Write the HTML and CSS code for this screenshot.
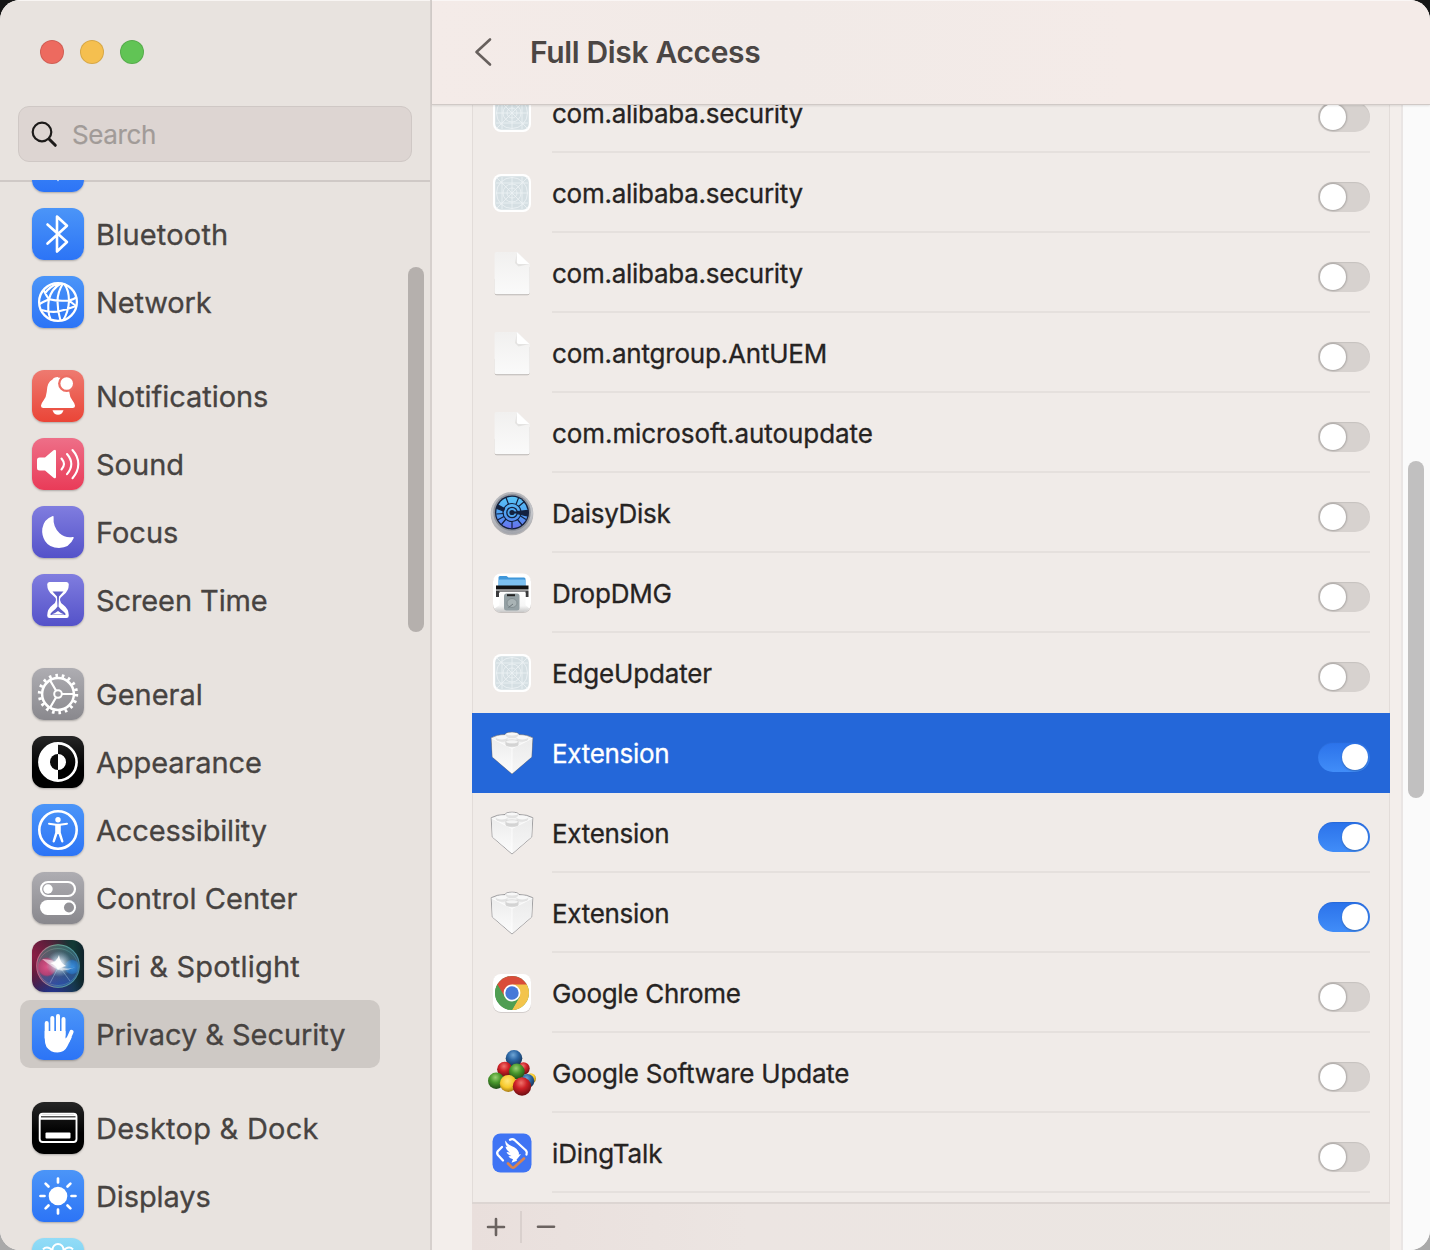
FILE: index.html
```html
<!DOCTYPE html>
<html lang="en">
<head>
<meta charset="utf-8">
<title>Full Disk Access</title>
<link rel="stylesheet" href="styles.css">
</head>
<body>
<svg class="defs" width="0" height="0" aria-hidden="true">
  <defs>
    <linearGradient id="paper" x1="0" y1="0" x2="0" y2="1"><stop offset="0" stop-color="#f1f0ef"/><stop offset="1" stop-color="#fafafa"/></linearGradient>
    <linearGradient id="rim" x1="0" y1="0" x2="0" y2="1"><stop offset="0" stop-color="#b4b5b9"/><stop offset=".5" stop-color="#c6c7cb"/><stop offset="1" stop-color="#a2a4ab"/></linearGradient>
    <linearGradient id="disc" x1="0" y1="0" x2="0" y2="1"><stop offset="0" stop-color="#5bc4f6"/><stop offset=".6" stop-color="#4f9cf2"/><stop offset="1" stop-color="#6a70ef"/></linearGradient>
    <linearGradient id="printer" x1="0" y1="0" x2="0" y2="1"><stop offset="0" stop-color="#ffffff"/><stop offset=".7" stop-color="#f6f6f6"/><stop offset="1" stop-color="#c9c9c9"/></linearGradient>
    <linearGradient id="brickl" x1="0" y1="0" x2="0" y2="1"><stop offset="0" stop-color="#ececec"/><stop offset="1" stop-color="#fcfcfc"/></linearGradient>
    <linearGradient id="brickr" x1="0" y1="0" x2="0" y2="1"><stop offset="0" stop-color="#ebebeb"/><stop offset="1" stop-color="#f6f6f6"/></linearGradient>
    <radialGradient id="bblue" cx=".45" cy=".3" r=".7"><stop offset="0" stop-color="#6fa6d6"/><stop offset=".45" stop-color="#2c66a4"/><stop offset="1" stop-color="#15304f"/></radialGradient>
    <radialGradient id="bred" cx=".45" cy=".3" r=".7"><stop offset="0" stop-color="#f0736c"/><stop offset=".45" stop-color="#cf2127"/><stop offset="1" stop-color="#6d0d12"/></radialGradient>
    <radialGradient id="bgreen" cx=".45" cy=".3" r=".7"><stop offset="0" stop-color="#9bd073"/><stop offset=".45" stop-color="#4a9a2d"/><stop offset="1" stop-color="#1f4d16"/></radialGradient>
    <radialGradient id="byellow" cx=".45" cy=".35" r=".7"><stop offset="0" stop-color="#ffe67a"/><stop offset=".55" stop-color="#f7c92c"/><stop offset="1" stop-color="#9a6d10"/></radialGradient>
    <radialGradient id="siriw"><stop offset="0" stop-color="#fff"/><stop offset=".35" stop-color="#e4f5ff" stop-opacity=".75"/><stop offset="1" stop-color="#8fc6d8" stop-opacity="0"/></radialGradient>
    <radialGradient id="sirip"><stop offset="0" stop-color="#e8538a" stop-opacity=".9"/><stop offset=".8" stop-color="#d03c72" stop-opacity=".75"/><stop offset="1" stop-color="#c03060" stop-opacity="0"/></radialGradient>
    <radialGradient id="sirib"><stop offset="0" stop-color="#3e97e8" stop-opacity=".9"/><stop offset=".8" stop-color="#2878cc" stop-opacity=".7"/><stop offset="1" stop-color="#2060b0" stop-opacity="0"/></radialGradient>
    <linearGradient id="sirig" x1=".2" y1="0" x2=".6" y2="1"><stop offset="0" stop-color="#3fa986" stop-opacity=".5"/><stop offset=".5" stop-color="#5d7fa8" stop-opacity=".5"/><stop offset="1" stop-color="#2f5fd0" stop-opacity=".6"/></linearGradient>
    <linearGradient id="sirir" x1="0" y1="0" x2="1" y2="0"><stop offset="0" stop-color="#d8628a"/><stop offset=".5" stop-color="#6fb89e"/><stop offset="1" stop-color="#4a90a8"/></linearGradient>

    <symbol id="app-generic" viewBox="0 0 48 48">
      <rect x="5" y="5" width="38" height="38" rx="8" fill="#fff"/>
      <rect x="7.200" y="7.200" width="33.600" height="33.600" rx="6" fill="#d5dfe3"/>
      <g fill="none" stroke="#edf3f5" stroke-width=".8">
        <path d="M8 14H40M8 24H40M8 34H40M14 8V40M24 8V40M34 8V40M8.500 8.500 39.500 39.500M39.500 8.500 8.500 39.500"/>
        <circle cx="24" cy="24" r="15.500"/><circle cx="24" cy="24" r="9"/><circle cx="24" cy="24" r="5"/>
      </g>
    </symbol>
    <symbol id="app-doc" viewBox="0 0 48 48">
      <path d="M6.800 30V44.300q0 1.900 1.900 1.900H39.500q2 0 2-1.900V18z" fill="#aaa5a3" opacity=".8"/>
      <path d="M8.500 3H29.500L41.700 15V43.500q0 1.700-1.700 1.700H8.300q-1.700 0-1.700-1.700V4.700Q6.600 3 8.500 3z" fill="url(#paper)"/>
      <path d="M29 3.500 41.200 15 30.500 17.500 27 14z" fill="#dddbda" opacity=".7"/>
      <path d="M28.800 3V13q0 2 2 2H41.500z" fill="#fff"/>
    </symbol>
    <symbol id="app-daisy" viewBox="0 0 48 48">
      <circle cx="24" cy="25" r="21.300" fill="#77797f" opacity=".5"/>
      <circle cx="24" cy="24" r="21" fill="url(#rim)"/>
      <circle cx="24" cy="23.500" r="18.700" fill="#8f939c"/>
      <circle cx="24" cy="23.500" r="17" fill="#13213f"/>
      <circle cx="24" cy="23.500" r="15.700" fill="url(#disc)"/>
      <g stroke="#13213f" stroke-width="1.200" fill="none">
        <circle cx="24" cy="23.500" r="9"/>
        <path d="M20.500 15.200 18 8.500M28 15.400 30.500 9M30.500 17.500 36.500 12.500M32.500 27 38 30.500M29.500 30.500 34 36M24 32.500V39M18 30 13.500 35.500M16 27.500 9.500 31M15.500 24.500 8.500 25"/>
        <path d="M16.500 19.500 9.800 16 9.200 19.500 15.500 22zM29 22.500 39.500 21.500V27L29 24.500z" fill="#13213f"/>
      </g>
      <circle cx="24" cy="23.500" r="5.200" fill="#4ea6ee" stroke="#13213f" stroke-width="1.300"/>
      <circle cx="24" cy="23.500" r="2.600" fill="#13213f"/><path d="M24 22.500H30V24.500H24z" fill="#13213f"/>
    </symbol>
    <symbol id="app-dmg" viewBox="0 0 48 48">
      <rect x="5" y="6" width="38" height="38" rx="8" fill="#aaa5a3" opacity=".6"/>
      <rect x="5" y="4.500" width="38" height="38.500" rx="8" fill="#fff"/>
      <path d="M10.500 10V8.500q0-1.500 1.500-1.500h6.500l2 1.600H36q1.500 0 1.500 1.500V20h-27z" fill="#3f97da"/>
      <path d="M10.500 12q0-1.500 1.500-1.500H36q1.500 0 1.500 1.500v7h-27z" fill="#7cc0f1"/>
      <path d="M8 16.500H40.500V20.500H8z" fill="#121214"/>
      <path d="M8 21.500H40.500V28H37.500V24H11V28H8z" fill="#3a3a3c"/>
      <path d="M11.500 22.500H37.500V36l4 3.500q-1.500 3.500-6 3.500H12.500q-4.500 0-6-3.500L11.500 36z" fill="url(#printer)"/>
      <path d="M12 21.800H37V23H12z" fill="#8a8a8c"/>
      <rect x="16" y="24.500" width="15.500" height="17" rx="2.500" fill="#94a0a4"/>
      <rect x="19" y="25.200" width="8" height="2" fill="#222"/>
      <ellipse cx="24" cy="34" rx="5" ry="4.500" fill="#a9b3b5" stroke="#7e898d" stroke-width=".8"/>
      <path d="M20.500 38.500 25 35" stroke="#6d777b" stroke-width="1"/>
    </symbol>
    <symbol id="app-brick" viewBox="0 0 48 48">
      <path d="M3.200 8.700Q9 5.500 17 5.500 18 3.200 24 3.200t7 2.300q8 0 13.800 3.200L43.700 28 24 45 4.300 28z" fill="#f3f3f3" stroke="#66666a" stroke-opacity=".6" stroke-width="1" stroke-linejoin="round"/>
      <path d="M3.700 9.200 24 19.500V44.500L4.700 28z" fill="url(#brickl)"/>
      <path d="M44.300 9.200 24 19.500V44.500L43.300 28z" fill="url(#brickr)"/>
      <path d="M3.700 9.200 24 19.500 44.300 9.200" fill="none" stroke="#fff" stroke-width=".8"/>
      <path d="M24 19.500V44" stroke="#fff" stroke-width=".8"/>
      <g fill="#e2e2e2">
        <path d="M18 5v2.500q0 1.600 6 1.600t6-1.600V5z"/><ellipse cx="24" cy="5" rx="6" ry="1.500" fill="#f8f8f8"/>
        <path d="M8 8.600v2.200q1.500 2 8 2l3.500-1.300V8.600z"/><ellipse cx="13.800" cy="8.500" rx="5.800" ry="1.900" fill="#f8f8f8"/>
        <path d="M40 8.600v2.200q-1.500 2-8 2l-3.500-1.300V8.600z"/><ellipse cx="34.200" cy="8.500" rx="5.800" ry="1.900" fill="#f8f8f8"/>
        <path d="M17.500 13v2.500q0 2.300 6.500 2.300t6.500-2.300V13z" fill="#d4d4d4"/><ellipse cx="24" cy="12.800" rx="6.500" ry="2" fill="#f4f4f4" stroke="#c8c8c8" stroke-width=".5"/>
      </g>
    </symbol>
    <symbol id="app-chrome" viewBox="0 0 48 48">
      <rect x="5" y="5.800" width="38" height="38" rx="8" fill="#c9c4c2"/>
      <rect x="5" y="5" width="38" height="38" rx="8" fill="#fff"/>
      <circle cx="24" cy="24" r="17" fill="#4f9e52"/>
      <path d="M24 24 9.280 15.500A17 17 0 0 1 38.720 15.500z" fill="#d94c3a"/>
      <path d="M38.720 15.500A17 17 0 0 1 24 41L31.500 28 24 15.500z" fill="#f3c44c"/>
      <path d="M9.280 15.500 16.800 28 31.500 28 24 15.500H38.700L24 15.500z" fill="#d94c3a"/>
      <path d="M9.280 15.500A17 17 0 0 0 24 41L31.500 28H16.800z" fill="#4f9e52"/>
      <circle cx="24" cy="24" r="8.400" fill="#fff"/><circle cx="24" cy="24" r="6.700" fill="#4679d8"/>
    </symbol>
    <symbol id="app-balls" viewBox="0 0 48 48">
      <circle cx="35.500" cy="19.500" r="6.200" fill="url(#bred)"/>
      <circle cx="42.700" cy="29.500" r="5.300" fill="url(#byellow)"/>
      <circle cx="39.300" cy="32" r="7" fill="url(#bblue)"/>
      <circle cx="26" cy="9.300" r="8.300" fill="url(#bblue)"/>
      <circle cx="16.700" cy="20.300" r="7.600" fill="url(#bred)"/>
      <circle cx="28.800" cy="22.500" r="7.900" fill="url(#bgreen)"/>
      <circle cx="8.200" cy="31.700" r="8.200" fill="url(#bgreen)"/>
      <circle cx="20.300" cy="34.500" r="8.500" fill="url(#byellow)"/>
      <circle cx="34" cy="37.500" r="9.200" fill="url(#bred)"/>
    </symbol>
    <symbol id="app-ding" viewBox="0 0 48 48">
      <rect x="4.500" y="4.500" width="39" height="39" rx="8" fill="#3f74f4"/>
      <g fill="none" stroke="#fff" stroke-width="2.300" stroke-linecap="round" stroke-linejoin="round">
        <path d="M22 10.700q2.500-1.300 4.500.3L38 21.500q1.500 2 .5 4"/>
        <path d="M14 18 10 22q-1.500 1.700-.3 3.700L15 31.500"/>
      </g>
      <path d="M20 34.500 23.500 38q1.500 1.200 3 0L36 29.500" fill="none" stroke="#d98350" stroke-width="2.600" stroke-linecap="round" stroke-linejoin="round"/>
      <path d="M17.500 11.500q1.500 4 6 5.500 6 2 7.500 7l-.3 1.500 2.300-.2-4.500 5.500.5 1-5.500 2 1.500-3.500q-3.500-.5-4.500-3l3-.2q-4-1-5-4.200l3.500.6q-4-2.500-4.500-6l2 .4q-3-3-2-6.400z" fill="#fff"/>
    </symbol>
  </defs>
</svg>

<div class="window">
  <aside class="sidebar">
    <div class="lights"><i class="light red"></i><i class="light amber"></i><i class="light green"></i></div>
    <div class="search">
      <svg width="28" height="28" viewBox="0 0 28 28" fill="none" stroke="#1d1b1a" stroke-linecap="round"><circle cx="11" cy="12" r="9.300" stroke-width="2.200"/><path d="M18 19 24.300 25.300" stroke-width="3"/></svg>
      <span>Search</span>
    </div>
    <nav class="nav">
      <div class="group">
        <div class="item"><span class="tile blue"><svg viewBox="0 0 52 52"><path d="M24 38 26 41.500 28 38z" fill="#fff"/></svg></span></div>
        <div class="item"><span class="tile blue"><svg viewBox="0 0 52 52"><path d="M15.500 16.500 35 34 25 43.500V8.500L35 17.700 15.500 35.500" fill="none" stroke="#fff" stroke-width="2.600" stroke-linecap="round" stroke-linejoin="round"/></svg></span><span class="label l-bt">Bluetooth</span></div>
        <div class="item"><span class="tile blue"><svg viewBox="0 0 52 52" fill="none" stroke="#fff" stroke-width="2.100"><circle cx="26" cy="26" r="18.900" stroke-width="2.300"/><path d="M29 7.500Q19 13 16.800 24 15 35 18.500 43M31 7.500Q25.500 16 25.500 25.500T28.500 44.500M32 7.500Q37 14 37 25 36.500 36 31 44.500M11.500 14Q14.500 20 17 23.300 26 25.500 36.500 24.500 41.500 24 44.500 21M26 7.300Q17 11 13 17.500M7.500 28Q11 26 17 23.300M9.500 34Q20 37 27 35.300 35 33.500 44 30M37 24.500 44 30"/></svg></span><span class="label l-net">Network</span></div>
      </div>
      <div class="group">
        <div class="item"><span class="tile red"><svg viewBox="0 0 52 52"><path d="M26 7.500q8 0 10.500 8 .5 2 .8 6.500.3 5 3.500 9 2.200 2.700 2.200 4.500 0 2.500-2.500 2.500h-29Q9 38 9 35.500q0-1.800 2.200-4.500 3.200-4 3.500-9Q15 12 20.500 9.500 21.500 7 26 7z" fill="#fff"/><path d="M20.500 40.300h11q-1.500 4.500-5.500 4.500t-5.500-4.500z" fill="#fff"/><circle cx="34.700" cy="13.500" r="8.600" fill="#ec6d63"/><circle cx="34.700" cy="13.500" r="6.300" fill="#fff"/></svg></span><span class="label l-not">Notifications</span></div>
        <div class="item"><span class="tile pink"><svg viewBox="0 0 52 52"><path d="M7.500 19.500h5.500L21.500 12.300q2.500-1.500 2.500 1V38.700q0 2.500-2.500 1L13 32.500H7.500q-2.500 0-2.500-2.500v-8q0-2.500 2.500-2.500z" fill="#fff"/><path d="M29.500 20.500Q32 23.500 32 26t-2.500 5.500M35 16Q39.300 21 39.300 26T35 36.200M40.500 12Q46.300 18.500 46.300 26T40.500 40.200" fill="none" stroke="#fff" stroke-width="2.100" stroke-linecap="round"/></svg></span><span class="label l-snd">Sound</span></div>
        <div class="item"><span class="tile indigo"><svg viewBox="0 0 52 52"><path d="M20.700 10q1-.3.900 1-.8 10 6 16.200 5.500 5 13 3.800 1.700-.2 1 1.300Q37.500 42 27 42 17.500 42 13 35 9.500 29 10.300 22.500 12 13 20.700 10z" fill="#fff"/></svg></span><span class="label l-foc">Focus</span></div>
        <div class="item"><span class="tile indigo"><svg viewBox="0 0 52 52"><path d="M17.500 8h17q2.300 0 2.300 2.500 0 6.500-5.300 10.500-3.500 2.500-3.500 5t3.500 5Q36.800 35 36.800 41.500 36.800 44 34.500 44h-17q-2.300 0-2.300-2.500Q15.200 35 20.500 31q3.500-2.500 3.500-5t-3.500-5Q15.200 17 15.200 10.500 15.200 8 17.500 8z" fill="#fff"/><path d="M20.500 17.500h11L27 22.500 26.500 32.500q1.500 2.500 5.500 5.500 2 1.700 1.500 3h-15q-.5-1.300 1.500-3 4-3 5.500-5.500L25 22.500z" fill="#6060c8"/><path d="M19.500 40.500q3.500-1 6.500-3.500 3 2.500 6.500 3.500z" fill="#fff"/></svg></span><span class="label l-scr">Screen Time</span></div>
      </div>
      <div class="group">
        <div class="item"><span class="tile gray"><svg viewBox="0 0 52 52" fill="none" stroke="#fff"><circle cx="26" cy="26" r="18.500" stroke-width="3.400" stroke-dasharray="2.600 3.858"/><circle cx="26" cy="26" r="15.900" stroke-width="2.500"/><circle cx="26" cy="26" r="3.800" stroke-width="2"/><path d="M30 26H42M24 22.500 18 12.200M24 29.500 18 39.800" stroke-width="2.200"/></svg></span><span class="label l-gen">General</span></div>
        <div class="item"><span class="tile black"><svg viewBox="0 0 52 52"><circle cx="26" cy="26" r="18.600" fill="none" stroke="#fff" stroke-width="2.600"/><path d="M26 7.500a18.500 18.500 0 0 0 0 37zM26 18a8 8 0 0 1 0 16z" fill="#fff"/><path d="M26 18a8 8 0 0 0 0 16z" fill="#0b0b0b"/></svg></span><span class="label l-app">Appearance</span></div>
        <div class="item"><span class="tile blue"><svg viewBox="0 0 52 52"><circle cx="26" cy="26" r="18.700" fill="none" stroke="#fff" stroke-width="2.600"/><circle cx="26" cy="15.700" r="2.700" fill="#fff"/><path d="M17 19.700 24 20.700H28L35 19.700" fill="none" stroke="#fff" stroke-width="2" stroke-linecap="round"/><path d="M23.200 20.200h5.600v8.300l2.600 8.500q.3 1.300-.8 1.500-1 .2-1.400-.8L26.500 30h-1l-2.700 7.700q-.4 1-1.400.8-1.100-.2-.8-1.500l2.600-8.500z" fill="#fff"/></svg></span><span class="label l-acc">Accessibility</span></div>
        <div class="item"><span class="tile gray"><svg viewBox="0 0 52 52"><rect x="9" y="10" width="34" height="14" rx="7" fill="none" stroke="#fff" stroke-width="2.200"/><circle cx="16" cy="17" r="4.700" fill="#fff"/><rect x="8" y="28" width="36" height="15" rx="7.500" fill="#fff"/><circle cx="37" cy="35.500" r="5" fill="#939297"/></svg></span><span class="label l-con">Control Center</span></div>
        <div class="item"><span class="tile siri"><svg viewBox="0 0 52 52"><circle cx="26" cy="26" r="21.500" fill="url(#sirig)"/><circle cx="15" cy="27" r="10" fill="url(#sirip)"/><circle cx="40" cy="27" r="8" fill="url(#sirib)"/><path d="M27 26 18 43M27 26 38 41" stroke="#b9d8f0" stroke-width=".8" opacity=".5"/><circle cx="27" cy="24" r="13" fill="url(#siriw)"/><path d="M10 19Q22 19 27 25 33 31 44 27 34 31 29 30.500 22 29 10 19z" fill="#fff" opacity=".55"/><path d="M27 15Q28 23 34 26 28 27 26 30 24 25 18 23 25 22 27 15z" fill="#fff" opacity=".9"/><circle cx="26" cy="26" r="21.300" fill="none" stroke="url(#sirir)" stroke-width="1.100" opacity=".85"/><ellipse cx="26" cy="27" rx="20" ry="18.500" fill="none" stroke="url(#sirir)" stroke-width=".7" opacity=".6"/></svg></span><span class="label l-sir">Siri &amp; Spotlight</span></div>
        <div class="item selected"><span class="tile blue"><svg viewBox="0 0 52 52"><g fill="none" stroke="#fff" stroke-width="4" stroke-linecap="round"><path d="M14.700 15V30M20.300 10V27M26 8V27M31.500 11V27"/><path d="M39.500 24 35.500 33" stroke-width="4.200"/></g><path d="M12.700 23H33.500V30.500L37.600 27 39.700 29.500Q37 35 35.500 38 32.500 44.500 25.500 44.500T14.500 39Q12.700 35.500 12.700 30z" fill="#fff"/></svg></span><span class="label l-pri">Privacy &amp; Security</span></div>
      </div>
      <div class="group">
        <div class="item"><span class="tile black"><svg viewBox="0 0 52 52"><rect x="7.700" y="11.700" width="36.800" height="28.300" rx="3" fill="none" stroke="#fff" stroke-width="1.900"/><path d="M8 12.500H44.500V17.800H8z" fill="#fff"/><path d="M9 14.800H43.500" stroke="#555" stroke-width="1.400"/><rect x="13.500" y="30.500" width="25" height="6" rx="1" fill="#fff"/></svg></span><span class="label l-des">Desktop &amp; Dock</span></div>
        <div class="item"><span class="tile blue"><svg viewBox="0 0 52 52"><circle cx="26" cy="26" r="9.300" fill="#fff"/><path d="M26 8.500V12.500M26 39.500V43.500M8.500 26H12.500M39.500 26H43.500M13.600 13.600 16.500 16.500M35.500 35.500 38.400 38.400M38.400 13.600 35.500 16.500M16.500 35.500 13.600 38.400" stroke="#fff" stroke-width="2.700" stroke-linecap="round"/></svg></span><span class="label l-dis">Displays</span></div>
        <div class="item"><span class="tile cyan"><svg viewBox="0 0 52 52" fill="none" stroke="#fff" stroke-width="2"><path d="M20.500 14V11.500a5.500 5.500 0 0 1 11 0V14M20.500 14a5.500 5.500 0 0 0-9.500-2.500M31.500 14a5.500 5.500 0 0 1 9.500-2.500"/></svg></span></div>
      </div>
    </nav>
    <div class="side-thumb"></div>
  </aside>

  <main class="main">
    <header class="header">
      <svg width="20" height="30" viewBox="0 0 20 30" fill="none" stroke="#67605d" stroke-width="2.600" stroke-linecap="round" stroke-linejoin="round"><path d="M16 2.500 2.500 15 16 27.500"/></svg>
      <h1>Full Disk Access</h1>
    </header>
    <div class="body">
      <section class="panel">
        <div class="rows">
          <div class="row"><svg class="app"><use href="#app-generic"/></svg><div class="cell"><span class="name n-ali">com.alibaba.security</span><i class="toggle"></i></div></div>
          <div class="row"><svg class="app"><use href="#app-generic"/></svg><div class="cell"><span class="name n-ali">com.alibaba.security</span><i class="toggle"></i></div></div>
          <div class="row"><svg class="app"><use href="#app-doc"/></svg><div class="cell"><span class="name n-ali">com.alibaba.security</span><i class="toggle"></i></div></div>
          <div class="row"><svg class="app"><use href="#app-doc"/></svg><div class="cell"><span class="name n-ant">com.antgroup.AntUEM</span><i class="toggle"></i></div></div>
          <div class="row"><svg class="app"><use href="#app-doc"/></svg><div class="cell"><span class="name n-ms">com.microsoft.autoupdate</span><i class="toggle"></i></div></div>
          <div class="row"><svg class="app"><use href="#app-daisy"/></svg><div class="cell"><span class="name n-dai">DaisyDisk</span><i class="toggle"></i></div></div>
          <div class="row"><svg class="app"><use href="#app-dmg"/></svg><div class="cell"><span class="name n-dmg">DropDMG</span><i class="toggle"></i></div></div>
          <div class="row"><svg class="app"><use href="#app-generic"/></svg><div class="cell"><span class="name n-edg">EdgeUpdater</span><i class="toggle"></i></div></div>
          <div class="row active"><svg class="app"><use href="#app-brick"/></svg><div class="cell"><span class="name n-ext">Extension</span><i class="toggle on"></i></div></div>
          <div class="row"><svg class="app"><use href="#app-brick"/></svg><div class="cell"><span class="name n-ext">Extension</span><i class="toggle on"></i></div></div>
          <div class="row"><svg class="app"><use href="#app-brick"/></svg><div class="cell"><span class="name n-ext">Extension</span><i class="toggle on"></i></div></div>
          <div class="row"><svg class="app"><use href="#app-chrome"/></svg><div class="cell"><span class="name n-chr">Google Chrome</span><i class="toggle"></i></div></div>
          <div class="row"><svg class="app"><use href="#app-balls"/></svg><div class="cell"><span class="name n-gsu">Google Software Update</span><i class="toggle"></i></div></div>
          <div class="row"><svg class="app"><use href="#app-ding"/></svg><div class="cell"><span class="name n-din">iDingTalk</span><i class="toggle"></i></div></div>
        </div>
        <footer class="footer">
          <svg width="48" height="46" viewBox="0 0 48 46"><path d="M16 23H32M24 15V31" stroke="#6b6360" stroke-width="2.600" stroke-linecap="round"/></svg>
          <i class="split"></i>
          <svg width="48" height="46" viewBox="0 0 48 46"><path d="M16 22.700H32" stroke="#6b6360" stroke-width="2.600" stroke-linecap="round"/></svg>
        </footer>
      </section>
      <div class="track"><div class="thumb"></div></div>
    </div>
  </main>
</div>
</body>
</html>
```
FILE: styles.css
```css
* { box-sizing: border-box; }
body {
  margin: 0;
  width: 1430px;
  height: 1250px;
  overflow: hidden;
  background: linear-gradient(#161616 0 50%, #a9a9a9 50%);
  font-family: Inter, "Liberation Sans", sans-serif;
}
.defs { position: absolute; }
.window {
  display: flex;
  width: 1430px;
  height: 1250px;
  border-radius: 20px;
  overflow: hidden;
  background: #f3eeeb;
}

/* Sidebar */
.sidebar {
  position: relative;
  display: flex;
  flex-direction: column;
  width: 432px;
  height: 1250px;
  background: #e8e3df;
  border-right: 2px solid #d6d0cd;
  box-shadow: inset 0 1px 0 #f8f5f3;
  color: #474341;
}
.lights { display: flex; gap: 16px; padding: 40px 0 0 40px; height: 106px; }
.light { width: 24px; height: 24px; border-radius: 50%; border: 1px solid rgba(0, 0, 0, .12); }
.light.red { background: #ed6a5f; }
.light.amber { background: #f5bf4f; }
.light.green { background: #61c455; }
.search {
  display: flex;
  align-items: center;
  gap: 13px;
  width: 394px;
  height: 56px;
  margin-left: 18px;
  padding-left: 12px;
  border: 1px solid #cfc8c5;
  border-radius: 11px;
  background: #ddd5d2;
  font-size: 26px;
  color: #a19b98;
}
.search span { letter-spacing: -.4px; padding-top: 1px; -webkit-text-stroke: .2px; }
.nav {
  display: flex;
  flex-direction: column;
  gap: 26px;
  flex: 1;
  min-height: 0;
  margin-top: 18px;
  background: linear-gradient(#cfc9c6, #cfc9c6) 0 0 / 100% 2px no-repeat;
  overflow: hidden;
}
.group:first-child { margin-top: -48px; }
.item {
  display: flex;
  align-items: center;
  gap: 12px;
  width: 360px;
  height: 68px;
  margin-left: 20px;
  padding-left: 12px;
  border-radius: 10px;
}
.item.selected { background: #cec9c5; }
.tile {
  width: 52px;
  height: 52px;
  border-radius: 12px;
  overflow: hidden;
  box-shadow: 0 1px 2px rgba(0, 0, 0, .25);
}
.tile svg { display: block; width: 52px; height: 52px; }
.tile.blue { background: linear-gradient(#4b95f8, #2c74f6); }
.tile.red { background: linear-gradient(#ee7a70, #ea4537); }
.tile.pink { background: linear-gradient(#ee6f88, #e93b58); }
.tile.indigo { background: linear-gradient(#807ddf, #5452c9); }
.tile.gray { background: linear-gradient(#aeadb2, #89888d); }
.tile.black { background: linear-gradient(#262626, #000 60%); }
.tile.cyan { background: linear-gradient(#93dcf7, #5fc6ee); }
.tile.siri { background: radial-gradient(circle at 0 30%, #8c1f46, transparent 60%), radial-gradient(circle at 40% 110%, #24359a, transparent 50%), linear-gradient(90deg, #3c1530, #123a35 80%, #10222c); }
.label { padding-top: 2px; font-size: 29px; line-height: 36px; white-space: nowrap; -webkit-text-stroke: .3px; }
.l-bt { letter-spacing: .2px; }
.l-net { letter-spacing: -.15px; }
.l-not { letter-spacing: -.05px; }
.l-scr, .l-app, .l-dis { letter-spacing: -.1px; }
.l-acc { letter-spacing: -.15px; }
.l-con { letter-spacing: .07px; }
.l-sir { letter-spacing: .2px; }
.l-pri { letter-spacing: -.06px; }
.l-des { letter-spacing: .25px; }
.side-thumb {
  position: absolute;
  left: 408px;
  top: 267px;
  width: 16px;
  height: 365px;
  border-radius: 8px;
  background: #b5b0ad;
}

/* Content */
.main { display: flex; flex-direction: column; width: 998px; height: 1250px; }
.header {
  position: relative;
  z-index: 1;
  display: flex;
  align-items: center;
  gap: 36px;
  height: 105px;
  padding: 0 0 1px 42px;
  background: linear-gradient(90deg, #f4ebe8, #f1eae7 35%, #f4ebe8 70%);
  border-bottom: 1px solid #d0c9c6;
  box-shadow: inset 0 1px 0 #faf6f5, 0 1px 2px rgba(0, 0, 0, .1);
}
.header h1 { margin: 0; font-size: 30px; line-height: 36px; font-weight: 600; letter-spacing: -.35px; color: #4b4644; white-space: nowrap; }
.body { display: flex; justify-content: space-between; flex: 1; min-height: 0; }
.panel {
  display: flex;
  flex-direction: column;
  width: 918px;
  margin-left: 40px;
  background: #f0ebe8;
  box-shadow: inset 1px 0 #e2dcd9, inset -1px 0 #e2dcd9;
}
.rows { flex: 1; min-height: 0; overflow: hidden; }
.row { display: flex; align-items: center; height: 80px; padding: 0 20px 0 16px; }
.row:first-child { margin-top: -32px; }
.app { width: 48px; height: 48px; margin-right: 16px; flex: none; }
.cell {
  display: flex;
  align-items: center;
  justify-content: space-between;
  flex: 1;
  height: 80px;
  border-bottom: 2px solid #e5e0dd;
  color: #262322;
}
.name { font-size: 26px; line-height: 32px; padding-top: 4px; white-space: nowrap; -webkit-text-stroke: .3px; }
.n-ali { letter-spacing: -.26px; }
.n-ant { letter-spacing: -.2px; }
.n-ms { letter-spacing: -.08px; }
.n-dai, .n-ext, .n-chr { letter-spacing: -.3px; }
.n-dmg { letter-spacing: -.25px; }
.n-edg { letter-spacing: -.15px; }
.n-gsu { letter-spacing: -.22px; }
.n-din { letter-spacing: -.1px; }
.row.active { background: #2467d9; }
.row.active .cell { color: #fff; border-color: transparent; }
.row:has(+ .active) .cell { border-color: transparent; }
.toggle {
  display: flex;
  width: 52px;
  height: 30px;
  margin-top: 10px;
  padding: 2px;
  border-radius: 15px;
  background: #d7d2cf;
  box-shadow: inset 0 1px 1px rgba(0, 0, 0, .08);
}
.toggle::before {
  content: "";
  width: 26px;
  height: 26px;
  border-radius: 50%;
  background: #fff;
  box-shadow: 0 0 2px 1px rgba(0, 0, 0, .22);
}
.toggle.on { justify-content: flex-end; background: linear-gradient(#2b72ea, #418df8); }
.toggle.on::before { box-shadow: 0 1px 2px rgba(0, 0, 0, .25); }
.footer {
  display: flex;
  align-items: center;
  height: 48px;
  border-top: 2px solid #dcd5d2;
  background: linear-gradient(90deg, #e9dfdc, #ece5e2 30%, #ebe6e2);
}
.split { width: 2px; height: 32px; background: #d9d0cd; }
.track {
  width: 29px;
  padding: 356px 0 0 5px;
  border-left: 2px solid #e9e5e4;
  background: #fafafa;
}
.thumb { width: 16px; height: 337px; border-radius: 8px; background: #c1c0c0; }
```
